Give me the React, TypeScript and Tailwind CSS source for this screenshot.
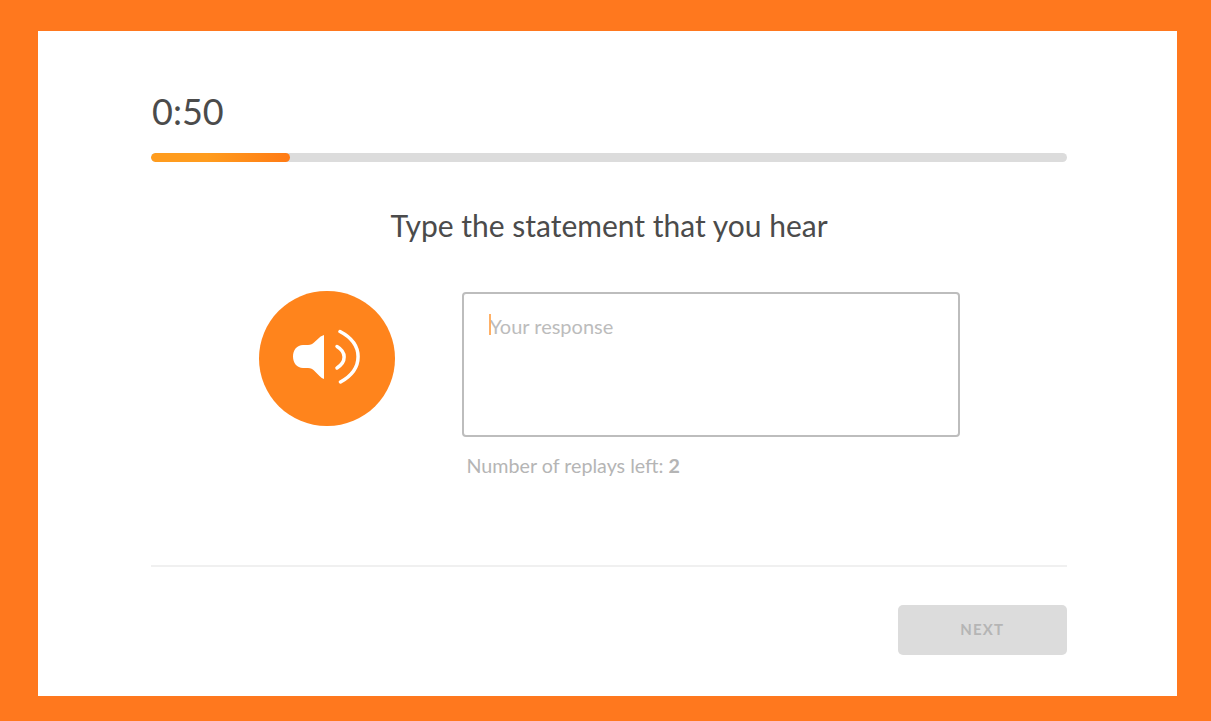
export default function App() {
  return (
    <div className="h-[721px] w-[1211px] bg-[#ff781e] pt-[31px] pb-[25px] pl-[38px] pr-[34px] font-['Lato',sans-serif]">
      <div className="flex h-[665px] w-[1139px] flex-col bg-white pl-[113px] pr-[110px]">
        <div className="ml-[1px] mt-[61px] h-[38px] text-[36px] leading-[38px] text-[#4b4b4b]">0:50</div>
        <div className="mt-[22.500px] h-[9px] w-full overflow-hidden rounded-full bg-[#dcdcdc]">
          <div className="h-full w-[139px] rounded-full bg-gradient-to-r from-[#ff9c1e] from-40% to-[#ff7a14]" />
        </div>
        <h1 className="mt-[47px] h-[32px] text-center text-[30px] font-normal leading-[32px] text-[#4b4b4b]">
          Type the statement that you hear
        </h1>
        <div className="mt-[51px] flex items-start pl-[108px]">
          <div className="mt-[-0.500px] flex h-[135px] w-[136px] shrink-0 items-center justify-center rounded-full bg-[#ff841c]">
            <svg width="68" height="56" viewBox="0 0 68 56" fill="none" className="mb-[6px]">
              <path
                d="M31 7 L31 51 C29.500 50.500 28 49.500 26.500 48 L21 42.500 C19.500 41 18 40 15 40 L10 40 C4 40 0 35 0 28.500 C0 22 4 17 10 17 L15 17 C18 17 19.500 16 21 14.500 L26.500 9.500 C28 8 29.500 7.500 31 7 Z"
                fill="#fff"
              />
              <path d="M44 18.500 C53.500 24 53.500 34 44 40" stroke="#fff" strokeWidth="3.500" strokeLinecap="round" />
              <path d="M47 3.500 C71 16 71 41 47.500 54" stroke="#fff" strokeWidth="3.500" strokeLinecap="round" />
            </svg>
          </div>
          <div className="ml-[66.500px] flex flex-col">
            <div className="relative h-[145px] w-[498px] rounded-[4px] border-2 border-[#bdbdbd] bg-white pl-[26px] pt-[19px] text-[20px] leading-[26px] text-[#bcbcbc]">
              <span className="absolute left-[25px] top-[20px] h-[21px] w-[2px] bg-[#ffb066]" />
              Your response
            </div>
            <p className="ml-[5px] mt-[17px] text-[19.700px] leading-[24px] text-[#b5b5b5]">
              Number of replays left: <b className="font-bold">2</b>
            </p>
          </div>
        </div>
        <div className="mt-[87px] h-[2px] w-full bg-[#f0f0f0]" />
        <div className="mt-[38px] flex justify-end">
          <button className="flex h-[50px] w-[169.500px] items-center justify-center rounded-[5px] bg-[#dcdcdc] text-[15px] font-bold tracking-[1.200px] text-[#b5b5b5]">
            NEXT
          </button>
        </div>
      </div>
    </div>
  );
}
